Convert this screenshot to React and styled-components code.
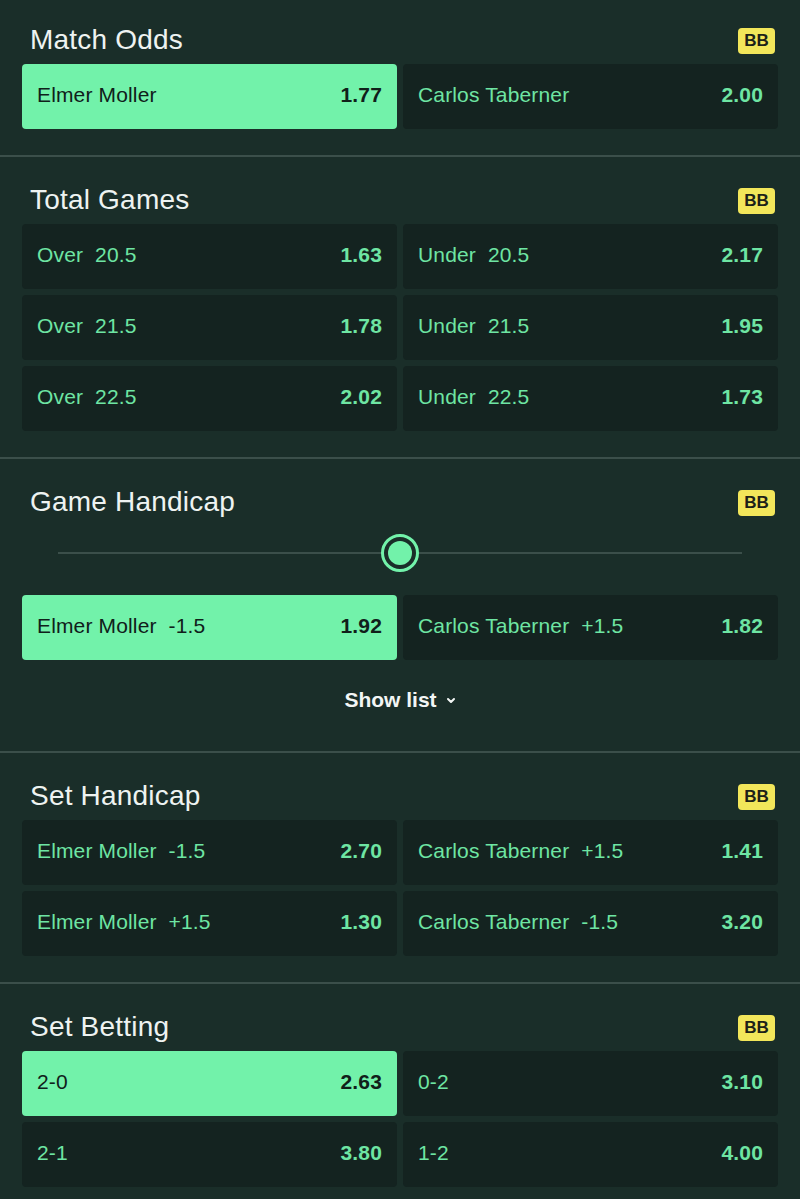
import React from 'react'
import styled, { createGlobalStyle } from 'styled-components'

const GlobalStyle = createGlobalStyle`
  html, body {
    margin: 0;
    padding: 0;
    background: #1a2e29;
    overflow: hidden;
  }
  body {
    font-family: 'Liberation Sans', Arial, sans-serif;
    -webkit-font-smoothing: antialiased;
  }
`

const Page = styled.div`
  width: 800px;
  background: #1a2e29;
`
const Section = styled.section`
  padding: ${p => (p.first ? '25px' : '28px')} 22px 26px;
  border-bottom: 2px solid #3b4f4a;
`
const Header = styled.div`
  height: 32px;
  display: flex;
  align-items: center;
  justify-content: space-between;
  margin-bottom: 7px;
`
const Title = styled.h2`
  margin: 0 0 2px;
  padding-left: 8px;
  font-size: 28px;
  font-weight: 400;
  color: #eef3f1;
  letter-spacing: 0.2px;
`
const Badge = styled.span`
  width: 37px;
  height: 26px;
  margin-right: 3px;
  border-radius: 4px;
  background: #f2e65a;
  color: #1c2118;
  font-size: 17px;
  font-weight: 700;
  display: flex;
  align-items: center;
  justify-content: center;
`
const Grid = styled.div`
  display: grid;
  grid-template-columns: 1fr 1fr;
  gap: 6px;
`
const Odd = styled.div`
  height: 65px;
  box-sizing: border-box;
  border-radius: 4px;
  padding: 0 15px 3px;
  display: flex;
  align-items: center;
  justify-content: space-between;
  font-size: 21px;
  letter-spacing: 0.15px;
  background: ${p => (p.selected ? '#72f2aa' : '#142320')};
  color: ${p => (p.selected ? '#10201a' : '#6ee5a3')};
`
const Label = styled.span`
  white-space: pre;
`
const Price = styled.span`
  font-weight: 700;
`
const SliderRow = styled.div`
  height: 54px;
  margin: 0 36px 15px;
  display: flex;
  align-items: center;
  justify-content: center;
  position: relative;
`
const Track = styled.div`
  position: absolute;
  left: 0;
  right: 0;
  top: 26px;
  height: 2px;
  background: #3b4f4a;
`
const Thumb = styled.div`
  position: relative;
  width: 32px;
  height: 32px;
  border-radius: 50%;
  border: 3px solid #72f2aa;
  background: #1a2e29;
  display: flex;
  align-items: center;
  justify-content: center;
  &::after {
    content: '';
    width: 24px;
    height: 24px;
    border-radius: 50%;
    background: #72f2aa;
  }
`
const ShowList = styled.div`
  margin: 28px 0 13px;
  height: 24px;
  display: flex;
  align-items: center;
  justify-content: center;
  gap: 9px;
  color: #f3f6f5;
  font-size: 21px;
  font-weight: 700;
`

const markets = [
  {
    title: 'Match Odds',
    odds: [
      ['Elmer Moller', '1.77', true],
      ['Carlos Taberner', '2.00'],
    ],
  },
  {
    title: 'Total Games',
    odds: [
      ['Over  20.5', '1.63'],
      ['Under  20.5', '2.17'],
      ['Over  21.5', '1.78'],
      ['Under  21.5', '1.95'],
      ['Over  22.5', '2.02'],
      ['Under  22.5', '1.73'],
    ],
  },
  {
    title: 'Game Handicap',
    slider: true,
    odds: [
      ['Elmer Moller  -1.5', '1.92', true],
      ['Carlos Taberner  +1.5', '1.82'],
    ],
  },
  {
    title: 'Set Handicap',
    odds: [
      ['Elmer Moller  -1.5', '2.70'],
      ['Carlos Taberner  +1.5', '1.41'],
      ['Elmer Moller  +1.5', '1.30'],
      ['Carlos Taberner  -1.5', '3.20'],
    ],
  },
  {
    title: 'Set Betting',
    odds: [
      ['2-0', '2.63', true],
      ['0-2', '3.10'],
      ['2-1', '3.80'],
      ['1-2', '4.00'],
    ],
  },
]

const Chevron = () => (
  <svg width="10" height="7" viewBox="0 0 10 7">
    <path d="M2 2l3 3 3-3" stroke="#f3f6f5" strokeWidth="2" fill="none" strokeLinecap="round" strokeLinejoin="round" />
  </svg>
)

export default function App() {
  return (
    <Page>
      <GlobalStyle />
      {markets.map((m, i) => (
        <Section key={m.title} first={i === 0}>
          <Header>
            <Title>{m.title}</Title>
            <Badge>BB</Badge>
          </Header>
          {m.slider && (
            <SliderRow>
              <Track />
              <Thumb />
            </SliderRow>
          )}
          <Grid>
            {m.odds.map(([label, price, selected]) => (
              <Odd key={label} selected={selected}>
                <Label>{label}</Label>
                <Price>{price}</Price>
              </Odd>
            ))}
          </Grid>
          {m.slider && (
            <ShowList>
              Show list <Chevron />
            </ShowList>
          )}
        </Section>
      ))}
    </Page>
  )
}
